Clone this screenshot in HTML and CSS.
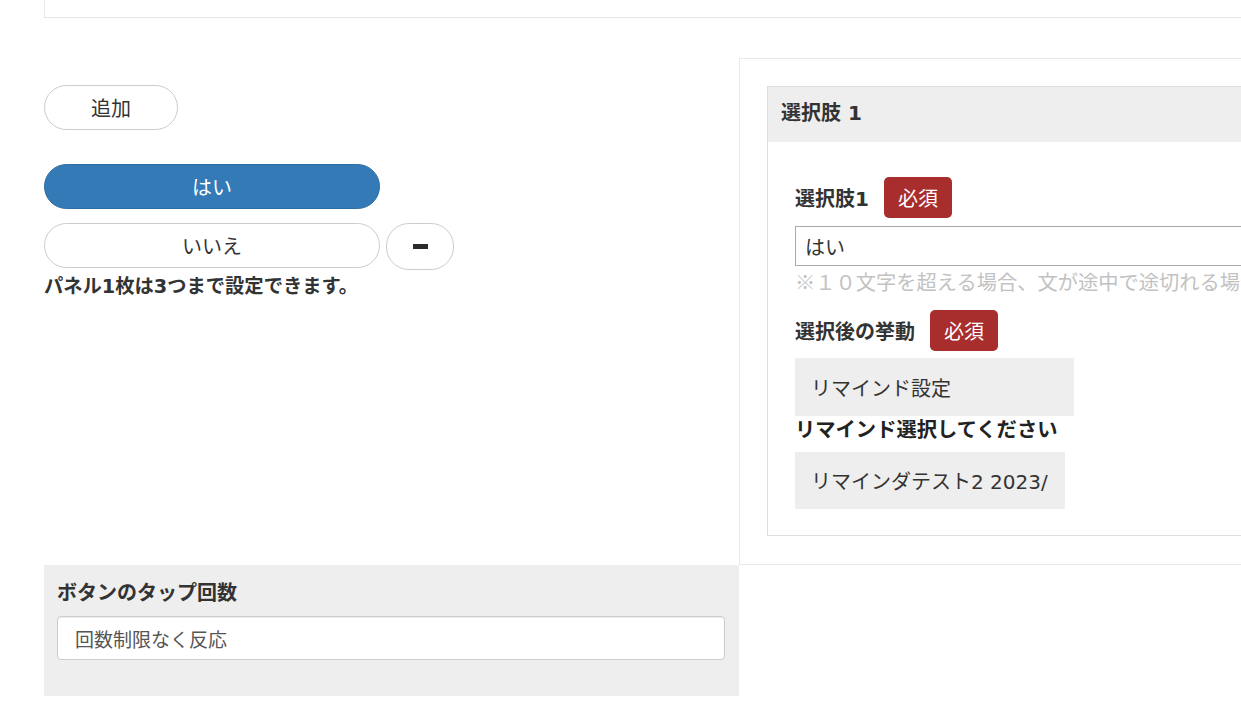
FILE: index.html
```html
<!DOCTYPE html>
<html lang="ja">
<head>
<meta charset="utf-8">
<title>パネル設定</title>
<link rel="stylesheet" href="styles.css">
</head>
<body>
<div class="page">
  <div class="top-box"></div>

  <div class="row">
    <div class="col-left">
      <button class="btn pill btn-add" type="button">追加</button>
      <button class="btn pill btn-choice btn-primary" type="button">はい</button>
      <div class="choice-row">
        <button class="btn pill btn-choice" type="button">いいえ</button>
        <button class="btn pill btn-minus" type="button" aria-label="削除"><span class="minus-bar"></span></button>
      </div>
      <p class="note">パネル1枚は3つまで設定できます。</p>
    </div>

    <div class="col-right">
      <div class="outer-panel">
        <div class="panel">
          <div class="panel-heading">選択肢 1</div>
          <div class="panel-body">
            <div class="label-row">
              <span class="field-label">選択肢1</span>
              <span class="badge-required">必須</span>
            </div>
            <div class="text-input">はい</div>
            <p class="help">※１０文字を超える場合、文が途中で途切れる場合があります。</p>

            <div class="label-row label-row-2">
              <span class="field-label">選択後の挙動</span>
              <span class="badge-required">必須</span>
            </div>
            <div class="grey-select select-remind">リマインド設定</div>
            <div class="sub-title">リマインド選択してください</div>
            <div class="grey-select select-test">リマインダテスト2 2023/</div>
          </div>
        </div>
      </div>
    </div>
  </div>

  <div class="row">
    <div class="col-left">
      <div class="tap-box">
        <div class="tap-title">ボタンのタップ回数</div>
        <div class="tap-input">回数制限なく反応</div>
      </div>
    </div>
  </div>
</div>
</body>
</html>
```

FILE: styles.css
```css
html, body {
  margin: 0;
  padding: 0;
  background: #fff;
  overflow: hidden;
}

body {
  font-family: "DejaVu Sans", "Noto Sans CJK JP", sans-serif;
  color: #333;
  font-size: 20px;
}

.page {
  margin-left: 44px;
  width: 1500px;
}

.top-box {
  height: 17px;
  border-left: 1px solid #e6e6e6;
  border-bottom: 1px solid #e6e6e6;
}

.row {
  display: flex;
  align-items: stretch;
}

.col-left {
  width: 695px;
  flex: 0 0 695px;
}

.col-right {
  flex: 0 0 760px;
}

/* Buttons */
.btn {
  box-sizing: border-box;
  display: flex;
  align-items: center;
  justify-content: center;
  font-family: inherit;
  font-size: 20px;
  color: #333;
  background: #fff;
  border: 1px solid #ccc;
  padding: 0;
  margin: 0;
  cursor: pointer;
}

.pill {
  border-radius: 23px;
}

.col-left > .btn-add {
  margin-top: 67px;
  width: 134px;
  height: 45px;
}

.btn-choice {
  width: 336px;
  height: 45px;
}

.col-left > .btn-primary {
  margin-top: 34px;
}

.btn-primary {
  background: #337ab7;
  border-color: #2e6da4;
  color: #fff;
}

.choice-row {
  display: flex;
  align-items: flex-start;
  gap: 6px;
  margin-top: 14px;
}

.btn-minus {
  width: 68px;
  height: 47px;
}

.minus-bar {
  display: block;
  width: 15px;
  height: 5px;
  background: #2b2b2b;
}

.note {
  margin: 4px 0 0;
  font-weight: bold;
  font-size: 19.3px;
  line-height: 26px;
}

/* Right panel */
.outer-panel {
  margin-top: 40px;
  border: 1px solid #e8e8e8;
  border-right: none;
  padding: 27px 0 28px 27px;
}

.panel {
  border: 1px solid #dedede;
  border-right: none;
}

.panel-heading {
  background: #eee;
  font-weight: bold;
  font-size: 20px;
  line-height: 28px;
  padding: 12px 13px 15px;
}

.panel-body {
  padding: 35px 27px 26px;
}

.label-row {
  display: flex;
  align-items: center;
  gap: 15px;
}

.label-row-2 {
  margin-top: 14px;
}

.field-label {
  font-weight: bold;
  font-size: 20px;
}

.badge-required {
  box-sizing: border-box;
  height: 41px;
  padding: 0 14px;
  display: flex;
  align-items: center;
  background: #a82e2e;
  color: #fff;
  border-radius: 5px;
  font-size: 20px;
}

.text-input {
  box-sizing: border-box;
  margin-top: 8px;
  height: 40px;
  border: 1px solid #aaa;
  border-right: none;
  padding: 0 9px;
  display: flex;
  align-items: center;
  font-size: 20px;
}

.help {
  margin: 2px 0 0;
  font-family: "Noto Sans CJK JP", sans-serif;
  font-size: 20.25px;
  line-height: 28px;
  color: #c2c2c2;
  white-space: nowrap;
}

.grey-select {
  box-sizing: border-box;
  background: #eee;
  padding: 0 16px;
  font-size: 20px;
  display: flex;
  align-items: center;
  white-space: nowrap;
  overflow: hidden;
}

.select-remind {
  margin-top: 7px;
  width: 279px;
  height: 58px;
}

.sub-title {
  font-weight: bold;
  font-size: 20.3px;
  line-height: 28px;
  color: #222;
}

.select-test {
  margin-top: 8px;
  width: 270px;
  height: 57px;
}

/* Bottom grey box */
.tap-box {
  background: #eee;
  padding: 14px 14px 36px 13px;
}

.tap-title {
  font-weight: bold;
  font-size: 20px;
  line-height: 28px;
}

.tap-input {
  box-sizing: border-box;
  margin-top: 9px;
  height: 44px;
  background: #fff;
  border: 1px solid #ccc;
  border-radius: 4px;
  box-shadow: inset 0 1px 1px rgba(0, 0, 0, 0.075);
  padding: 0 17px;
  display: flex;
  align-items: center;
  font-size: 19px;
  color: #555;
}
```
